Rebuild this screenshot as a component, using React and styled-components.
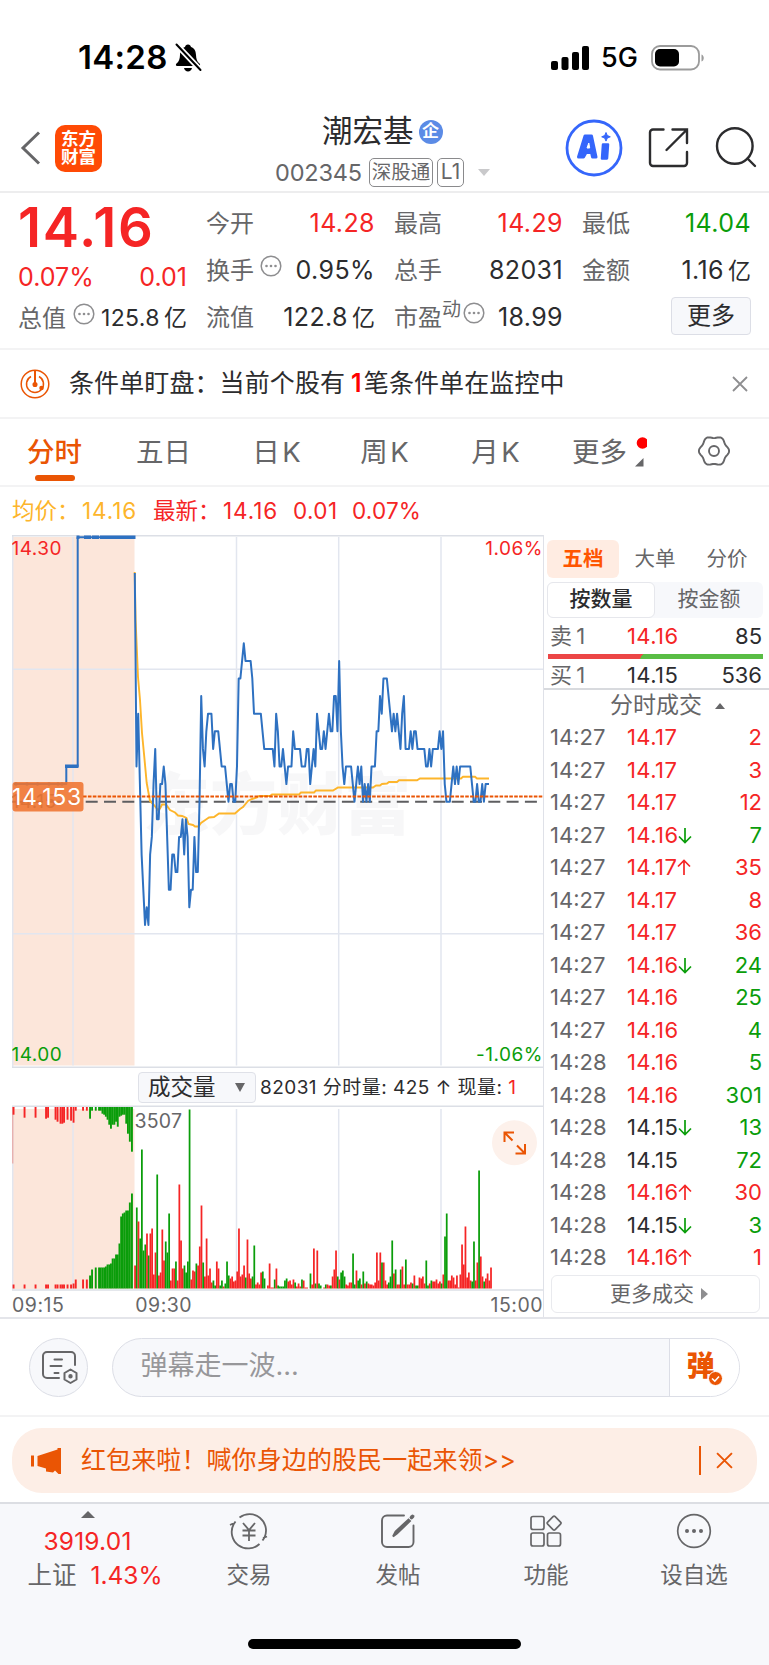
import styled, { createGlobalStyle } from 'styled-components'

const RED = '#f52525'
const GREEN = '#0a9d0a'
const ORANGE = '#ea5504'
const DARK = '#2c2c2e'
const GRAY = '#666668'

const GlobalStyle = createGlobalStyle`
  * {
    box-sizing: border-box;
  }
  body {
    margin: 0;
    background: #fff;
    color: ${DARK};
    font-family: Inter, "Noto Sans CJK SC", sans-serif;
    font-size: 24px;
    line-height: 1;
  }
  svg {
    display: block;
    flex: none;
  }
`

const Page = styled.div`
  width: 769px;
  height: 1665px;
  display: flex;
  flex-direction: column;
  overflow: hidden;
  white-space: nowrap;
`

/* status bar */
const StatusBar = styled.div`
  height: 100px;
  padding: 15px 64px 0 78px;
  display: flex;
  align-items: center;
  color: #000;
`
const Clock = styled.div`
  font-size: 33px;
  font-weight: 600;
  width: 96px;
  letter-spacing: 0.3px;
`
const StatusRight = styled.div`
  margin-left: auto;
  display: flex;
  align-items: center;
`
const Network = styled.span`
  font-size: 27px;
  font-weight: 450;
  width: 60px;
  padding-left: 12px;
`

/* header */
const Header = styled.header`
  height: 93px;
  padding-left: 20px;
  display: flex;
  border-bottom: 2px solid #ededee;
`
const HeaderLeft = styled.div`
  width: 255px;
  display: flex;
  align-items: center;
  padding-top: 5px;
`
const Logo = styled.div`
  width: 47px;
  height: 47px;
  margin-left: 14px;
  border-radius: 10px;
  background: #ff4a05;
  color: #fff;
  font-size: 17.5px;
  font-weight: 700;
  line-height: 18px;
  padding-top: 5px;
  text-align: center;
`
const HeaderMid = styled.div`
  width: 216px;
  display: flex;
  flex-direction: column;
`
const StockName = styled.div`
  display: flex;
  align-items: center;
  height: 33px;
  margin-top: 15px;
  padding-left: 47px;
  font-size: 30.5px;
`
const Badge = styled.span`
  width: 24px;
  height: 24px;
  border-radius: 50%;
  margin-left: 5px;
  background: #5b8be6;
  color: #fff;
  font-size: 17px;
  line-height: 23px;
  font-weight: 700;
  text-align: center;
`
const StockCode = styled.div`
  display: flex;
  align-items: center;
  height: 29px;
  margin-top: 10px;
  font-size: 23.5px;
  color: ${GRAY};
`
const CodeText = styled.span`
  width: 94px;
  letter-spacing: -0.2px;
`
const Tag = styled.span`
  width: ${p => p.$w}px;
  height: 29px;
  margin-right: 4px;
  border: 1.5px solid #8a8a8c;
  border-radius: 5px;
  font-size: ${p => p.$size || 19.5}px;
  line-height: 26px;
  text-align: center;
`
const Caret = styled.i`
  margin-left: ${p => p.$ml || 0}px;
  border: ${p => p.$w || 6.5}px solid transparent;
  border-${p => (p.$up ? 'bottom' : 'top')}: ${p => p.$h || 7}px solid ${p => p.$color || '#c9c9cb'};
  border-${p => (p.$up ? 'top' : 'bottom')}: 0;
`
const HeaderRight = styled.div`
  flex: 1;
  padding: 5px 0 0 74px;
  display: flex;
  align-items: center;
`

/* quote summary */
const Quotes = styled.section`
  height: 157px;
  padding: 0 18px 0 18px;
  display: flex;
  border-bottom: 2px solid #f3f3f4;
`
const QuoteMain = styled.div`
  width: 169px;
  margin-right: 19px;
  display: flex;
  flex-direction: column;
`
const BigPrice = styled.div`
  height: 66px;
  font-size: 54.5px;
  line-height: 68px;
  font-weight: 600;
  color: ${RED};
  letter-spacing: 1.7px;
`
const Change = styled.div`
  display: flex;
  justify-content: space-between;
  height: 36px;
  align-items: center;
  font-size: 25px;
  color: ${RED};
`
const QuoteCol = styled.div`
  width: 169px;
  margin-right: 19px;
  padding-top: 7px;
  display: flex;
  flex-direction: column;
  &:last-child {
    margin-right: 0;
  }
`
const QuoteRow = styled.div`
  height: 47px;
  display: flex;
  align-items: center;
  font-size: ${p => p.$size || 25}px;
`
const Label = styled.span`
  font-size: 24px;
  color: ${GRAY};
`
const Sup = styled.sup`
  font-size: 19px;
  line-height: 19px;
  color: ${GRAY};
  align-self: flex-start;
  margin-top: 6px;
`
const Value = styled.span`
  margin-left: auto;
  letter-spacing: 0.4px;
  color: ${p => p.$color || DARK};
`
const Unit = styled.span`
  font-size: 23px;
  margin-left: 4px;
  letter-spacing: 0;
`
const MoreBtn = styled.button`
  width: 80px;
  height: 38px;
  margin: -4px 0 0 auto;
  padding: 0;
  border: 1.5px solid #dcdee6;
  border-radius: 4px;
  background: #f7f8fb;
  color: ${DARK};
  font: 400 24px Inter, "Noto Sans CJK SC", sans-serif;
  line-height: 34px;
`

/* monitoring notice */
const Notice = styled.div`
  height: 69px;
  padding: 0 21px 0 20px;
  display: flex;
  align-items: center;
  border-bottom: 2px solid #f3f3f4;
  font-size: 25px;
`
const NoticeText = styled.div`
  flex: 1;
  margin-left: 19px;
  letter-spacing: 0.1px;
  b {
    color: #f00;
    font-weight: 600;
    margin: 0 2px 0 6px;
  }
`

/* period tabs */
const Tabs = styled.nav`
  height: 68px;
  display: grid;
  grid-template-columns: 109px 109px 117px 99px 123px 101px 111px;
  border-bottom: 2px solid #f3f3f4;
`
const Tab = styled.div`
  display: flex;
  flex-direction: column;
  align-items: center;
  padding-top: 18px;
  font-size: 27.5px;
  line-height: 30px;
  color: ${p => (p.$active ? ORANGE : GRAY)};
  font-weight: ${p => (p.$active ? 500 : 400)};
  word-spacing: -5px;
`
const Underline = styled.span`
  width: 40px;
  height: 6px;
  border-radius: 3px;
  margin-top: 8px;
  background: ${ORANGE};
`
const MoreTab = styled(Tab)`
  flex-direction: row;
  align-items: flex-start;
  padding-left: 15px;
`
const GearTab = styled(Tab)`
  padding-top: 16px;
`

const InfoLine = styled.div`
  height: 48px;
  padding: 1px 12px 0;
  display: flex;
  align-items: center;
  font-size: 22.5px;
`
const InfoItem = styled.span`
  width: ${p => p.$w}px;
  letter-spacing: ${p => p.$ls || 0}px;
  color: ${p => p.$color || RED};
`

/* main area */
const Main = styled.main`
  height: 784px;
  display: flex;
  border-bottom: 2px solid #e4e5ea;
`
const ChartCol = styled.div`
  width: 544px;
  padding-left: 12px;
  border-right: 1.5px solid #dfe1e8;
`
const VolumeHead = styled.div`
  height: 37px;
  padding: 1px 0 0 126px;
  display: flex;
  align-items: center;
  font-size: 19px;
`
const Select = styled.div`
  width: 118px;
  height: 31px;
  margin-right: 4px;
  padding: 0 10px 0 9px;
  display: flex;
  align-items: center;
  justify-content: space-between;
  border: 1.5px solid #dfe1e8;
  border-radius: 4px;
  background: #f7f8fb;
  font-size: 22.5px;
`
const VolumeText = styled.span`
  color: ${DARK};
  letter-spacing: 0.45px;
  b {
    font-weight: 400;
    color: ${RED};
  }
`
const TimeAxis = styled.div`
  display: flex;
  height: 27px;
  padding-top: 3px;
  align-items: center;
  font-size: 19.5px;
  letter-spacing: 0.5px;
  color: ${GRAY};
  span:nth-child(2) {
    margin-left: 71px;
  }
  span:last-child {
    margin-left: auto;
  }
`

/* order book */
const BookCol = styled.div`
  flex: 1;
  display: flex;
  flex-direction: column;
`
const BookTabs = styled.div`
  display: grid;
  grid-template-columns: repeat(3, 72px);
  padding: 5px 0 0 3px;
`
const BookTab = styled.div`
  height: 38px;
  border-radius: 6px;
  background: ${p => (p.$active ? '#ffece2' : 'none')};
  color: ${p => (p.$active ? '#ff5500' : GRAY)};
  font-size: 20.5px;
  font-weight: ${p => (p.$active ? 700 : 400)};
  line-height: 37px;
  text-align: center;
`
const Segment = styled.div`
  width: 216px;
  height: 36px;
  margin: 4px 0 0 3px;
  display: flex;
  border-radius: 6px;
  background: #f7f8fb;
`
const SegmentItem = styled.div`
  width: 108px;
  border: 1.5px solid ${p => (p.$active ? '#e6e7ec' : 'transparent')};
  border-radius: 6px;
  background: ${p => (p.$active ? '#fff' : 'none')};
  color: ${p => (p.$active ? DARK : GRAY)};
  font-size: 21px;
  font-weight: ${p => (p.$active ? 500 : 400)};
  line-height: 32px;
  text-align: center;
`
const Row = styled.div`
  height: ${p => p.$h || 32.5}px;
  padding: ${p => p.$pt || 0}px 7px 0 6px;
  display: flex;
  align-items: center;
  font-size: 22px;
`
const Time = styled.span`
  width: 77px;
  color: ${GRAY};
  word-spacing: -2px;
`
const Price = styled.span`
  display: flex;
  width: 70px;
  letter-spacing: 0.4px;
  color: ${p => p.$color};
`
const Qty = styled.span`
  flex: 1;
  text-align: right;
  color: ${p => p.$color};
`
const Ratio = styled.div`
  width: 215px;
  height: 5px;
  margin: 0 0 0 4px;
  background: linear-gradient(125deg, #ec4646 43.5%, #59bd45 43.5%);
`
const DealHead = styled.div`
  height: 33px;
  padding-left: 66px;
  display: flex;
  align-items: center;
  border-top: 2px solid #d8dade;
  font-size: 23px;
  color: ${GRAY};
`
const MoreDeals = styled.div`
  width: 209px;
  height: 38px;
  margin: 1px 0 0 7px;
  padding-left: 7px;
  display: flex;
  align-items: center;
  justify-content: center;
  gap: 7px;
  border: 1.5px solid #e9eaee;
  border-radius: 6px;
  font-size: 21px;
  color: ${GRAY};
`

/* comment bar */
const CommentBar = styled.div`
  height: 98px;
  padding: 19px 29px 0;
  display: flex;
  border-bottom: 2px solid #f3f3f4;
`
const RoundBtn = styled.div`
  width: 59px;
  height: 59px;
  border: 1.5px solid #dcdee6;
  border-radius: 50%;
  background: #f7f8fb;
  padding: 11px 0 0 11px;
`
const InputBox = styled.div`
  width: 628px;
  height: 59px;
  margin-left: 23.5px;
  display: flex;
  border: 1.5px solid #dcdee6;
  border-radius: 30px;
  background: #f7f8fb;
  overflow: hidden;
`
const Placeholder = styled.div`
  flex: 1;
  padding-left: 28px;
  font-size: 27px;
  line-height: 53px;
  color: #97979a;
`
const SendBox = styled.div`
  width: 70px;
  border-left: 1.5px solid #dcdee6;
  background: #fff;
  display: flex;
  padding: 13px 0 0 17px;
  font-size: 28px;
  font-weight: 900;
  color: ${ORANGE};
  svg {
    margin: 19px 0 0 -7px;
  }
`

/* promo banner */
const BannerWrap = styled.div`
  height: 87px;
  padding: 11px 12px 0;
  border-bottom: 2px solid #dcdee3;
`
const Banner = styled.div`
  height: 65px;
  border-radius: 30px;
  padding: 0 24px 0 19px;
  display: flex;
  align-items: center;
  background: #fdeee6;
  color: ${ORANGE};
  font-size: 25px;
`
const BannerText = styled.div`
  flex: 1;
  margin-left: 19px;
  letter-spacing: 0.1px;
`
const Divider = styled.span`
  width: 2px;
  height: 29px;
  margin-right: 15px;
  background: ${ORANGE};
`

/* bottom bar */
const BottomBar = styled.footer`
  flex: 1;
  background: #f7f8fb;
  display: flex;
  flex-direction: column;
  align-items: center;
`
const BottomNav = styled.div`
  width: 100%;
  height: 135px;
  display: grid;
  grid-template-columns: 175px 148px 150px 146px 150px;
`
const Index = styled.div`
  display: flex;
  flex-direction: column;
  align-items: center;
  padding-top: 7px;
  font-size: 24.5px;
  color: ${RED};
`
const IndexValue = styled.div`
  margin-top: 11px;
  height: 34px;
  letter-spacing: 0.2px;
`
const IndexName = styled.div`
  display: flex;
  align-items: center;
  gap: 14px;
  margin-left: 15px;
  span {
    color: ${GRAY};
  }
`
const NavItem = styled.div`
  display: flex;
  flex-direction: column;
  align-items: center;
  padding-top: 7px;
  font-size: 22.5px;
  color: ${GRAY};
  svg {
    margin-bottom: 13px;
  }
`
const HomeIndicator = styled.div`
  width: 273px;
  height: 10px;
  border-radius: 5px;
  background: #000;
`

// last price of every minute, in ticks of 0.01 from the previous close
const ticks = [
  13, 2, 5, 1, -3, -5, -7, -6, -7, -3, -2, 1, 3, -1, -1, 1, 1, 2, 1, -2,
  -5, -5, -3, -3, -4, -4, -2, -2, -1, -3, -1, -2, -6, -5, -5, -2, -4, -4, 0, 6,
  3, 2, 4, 5, 5, 5, 3, 4, 4, 4, 3, 2, 2, 2, 1, 0, 1, 1, 0, 0,
  2, 7, 7, 8, 9, 8, 8, 8, 8, 7, 5, 5, 5, 5, 5, 4, 3, 3, 3, 3,
  3, 3, 2, 5, 4, 2, 2, 3, 2, 1, 2, 2, 2, 4, 3, 3, 3, 3, 2, 2,
  2, 3, 3, 1, 2, 3, 2, 5, 4, 3, 3, 4, 3, 4, 5, 4, 4, 6, 6, 4,
  8, 4, 2, 1, 2, 2, 2, 2, 1, 0, 1, 2, 1, 2, 0, 1, 0, 1, 0, 2,
  2, 2, 4, 4, 6, 5, 7, 7, 7, 6, 5, 4, 5, 4, 5, 4, 3, 5, 6, 3,
  3, 3, 4, 3, 4, 4, 3, 3, 3, 3, 3, 2, 2, 3, 2, 3, 3, 3, 3, 4,
  3, 4, 1, 0, 0, 0, 1, 2, 1, 2, 1, 2, 2, 2, 2, 2, 2, 2, 1, 0,
  0, 1, 0, 0, 1, 0, 1, 1, 1,
]

// volume bars, negative ones are sell side (green)
const volumes = [
  23, -81, 67, -50, -139, -38, -44, 55, -33, 55, 60, 14, 36, -114, 13, 16, 59, 28, -47, -36,
  -75, 8, 20, 20, -27, 8, 104, 48, 20, -23, -16, -27, -179, 9, 18, 17, -25, 23, 42, 83,
  -26, 12, 50, 13, 20, 6, -8, -3, 27, 20, -3, -8, 2, -5, -27, -13, 10, 12, 7, 8,
  17, 60, 12, 14, 23, -11, 49, 15, 10, -12, -43, 4, 6, 4, 16, -17, -10, 0, 3, 25,
  1, 1, -9, 20, -3, -2, -2, -2, -8, -10, 7, 8, 4, 9, -6, 2, 5, 2, -9, 8,
  1, 1, 0, -15, 4, 40, -5, 38, -5, -3, 0, 1, -4, 4, 3, -3, 12, 19, 38, -12,
  9, -16, -18, -12, 4, 3, 6, 6, -35, -4, 18, -8, -10, 4, -17, 5, -7, 5, 4, 4,
  3, 6, 36, 8, 36, -26, 26, 8, 4, -6, -12, -48, 15, -19, 4, 4, -19, 22, 4, -29,
  4, 4, 6, -5, 13, -3, -3, 11, 10, 12, 5, -28, -3, 5, -8, 7, 7, 9, 5, 7,
  -5, 14, -52, -75, 8, 8, 13, 11, 4, 13, 1, 14, 44, 24, 62, 11, 16, 8, -7, -47,
  8, 26, -118, 32, 12, -7, 10, 15, 8, 21,
]

// call auction bars: x, height from the top, height from the bottom
const auctionRed = [
  [13.5, 8, 4], [24.5, 11, 4], [35.5, 11, 4], [46, 12, 4], [48, 11, 4], [55.5, 13, 4], [57.5, 15, 4],
  [60.5, 17, 4], [62.3, 17, 4], [64, 16, 4], [67.5, 13, 4], [71, 14, 4], [73.5, 16, 5], [75.7, 4, 9],
  [83, 4, 9], [86.8, 4, 9],
]
const auctionGreen = [
  [90, 12, 13], [92, 4, 19], [95.7, 4, 21], [99, 4, 21], [100.7, 4, 21], [102.4, 7, 21], [104.1, 8, 21],
  [105.8, 10, 22], [107.5, 13, 24], [109.2, 18, 24], [110.9, 22, 25], [112.6, 18, 30], [114.3, 18, 30],
  [116, 15, 34], [117.7, 20, 34], [119.4, 10, 45], [121.1, 9, 72], [122.8, 8, 75], [124.5, 8, 76],
  [126.2, 17, 78], [127.9, 27, 78], [129.8, 35, 86], [131.9, 45, 95],
]

const avgLine =
  '134.7,572 135.6,620 138,677 140,700 142,733 144.3,757 146.7,783 150,801 153,804 158,810 160,808.5 162,804.5 ' +
  '166,804.5 170,810 175,812.5 178,815.5 182,816 186.5,818 188.5,824 193,825 195,826.5 198.5,826.5 201,823 206,819.5 ' +
  '209,817.5 214,817 219,813.5 235,813.5 240,809 243,807 248,801 252,799 257,797.5 259,796 270,796 272,794.5 299,794.5 ' +
  '301,792.5 314,792.5 316,790.5 333,790.5 338,787.5 373,787.5 376,785.5 380,785.5 382,784 387,783.5 389,782 397,782 ' +
  '399,780.3 417,780.3 420,778.5 461,778.5 463,776.7 475,776.7 477,778.5 489,778.5'

const minuteX = i => 134.8 + i * 1.703

// six-lobed outline of the settings gear
const gearPoints = Array.from({ length: 72 }, (_, i) => {
  const a = (i * Math.PI) / 36
  const r = 14 + 1.1 * Math.cos(6 * a)
  return `${(16 + r * Math.cos(a)).toFixed(2)},${(16 + r * Math.sin(a)).toFixed(2)}`
}).join(' ')

const trades = [
  ['14:27', '14.17', '', 2, 1],
  ['14:27', '14.17', '', 3, 1],
  ['14:27', '14.17', '', 12, 1],
  ['14:27', '14.16', 'down', 7, 0],
  ['14:27', '14.17', 'up', 35, 1],
  ['14:27', '14.17', '', 8, 1],
  ['14:27', '14.17', '', 36, 1],
  ['14:27', '14.16', 'down', 24, 0],
  ['14:27', '14.16', '', 25, 0],
  ['14:27', '14.16', '', 4, 0],
  ['14:28', '14.16', '', 5, 0],
  ['14:28', '14.16', '', 301, 0],
  ['14:28', '14.15', 'down', 13, 0],
  ['14:28', '14.15', '', 72, 0],
  ['14:28', '14.16', 'up', 30, 1],
  ['14:28', '14.15', 'down', 3, 0],
  ['14:28', '14.16', 'up', 1, 1],
]

const Arrow = ({ dir }) => (
  <svg width="14" height="22" viewBox="0 0 14 22" fill="none" strokeWidth="1.7" stroke={dir === 'up' ? RED : GREEN}>
    <path d={dir === 'up' ? 'M7 19V5M1 10.5L7 4.5L13 10.5' : 'M7 4V18M1 12.5L7 18.5L13 12.5'} />
  </svg>
)

const DotsIcon = styled.svg`
  margin: -9px 0 0 ${p => p.$ml}px;
`
const Dots = ({ ml }) => (
  <DotsIcon $ml={ml} width="22" height="22" viewBox="0 0 22 22">
    <circle cx="11" cy="11" r="9.8" fill="none" stroke="#8e8e90" strokeWidth="1.5" />
    <g fill="#8e8e90">
      <circle cx="6.5" cy="11" r="1.3" />
      <circle cx="11" cy="11" r="1.3" />
      <circle cx="15.5" cy="11" r="1.3" />
    </g>
  </DotsIcon>
)

const Close = ({ color, size = 16 }) => (
  <svg width={size} height={size} viewBox="0 0 16 16" stroke={color} strokeWidth="1.8">
    <path d="M1 1L15 15M15 1L1 15" />
  </svg>
)

const PriceChart = () => (
  <svg width="532" height="533" viewBox="12 535 532 533">
    <rect x="12.5" y="537" width="122" height="528.5" fill="#fce6da" />
    <g stroke="#e2e6ef" strokeWidth="1.5">
      <path d="M12.7 535V1067M73 537V1065.5M236.5 537V1065.5M338.7 537V1065.5M441 537V1065.5" />
      <path d="M12 669.3H543M12 933.8H543" />
      <path d="M12 535.7H543M12 1067.3H543" stroke="#dcdfe6" strokeWidth="1.6" />
    </g>
    <text x="143" y="829" fontSize="67" fontWeight="900" fill="#f6f6f7" fillOpacity="0.85">东方财富</text>
    <path d="M12.5 801.7H543" stroke="#5e5e60" strokeWidth="2" strokeDasharray="12 6.3" />
    <polyline points={avgLine} fill="none" stroke="#fdb52b" strokeWidth="1.9" />
    <g fill="none" stroke="#2e71c1" strokeWidth="2" strokeLinejoin="round">
      <path d="M14 784H66.3V766.3H77.7V537.3H134" />
      <polyline points={ticks.map((t, i) => `${minuteX(i)},${801.7 - t * 17.6}`).join(' ')} />
    </g>
    <path d="M76.5 537.3H79.500M84 537.3H91M92 537.3H99M100 537.3H135.5M65 766.3H78.5" stroke="#2e71c1" strokeWidth="3.6" />
    <g fill="#2e71c1">
      {[16, 27, 37.5, 49, 58, 62].map(x => <circle key={x} cx={x} cy="784" r="1.8" />)}
    </g>
    <path d="M83 796.5H543" stroke={ORANGE} strokeWidth="2.2" strokeDasharray="3.6 1.3" />
    <g fontSize="19" letterSpacing="0.5">
      <text x="11.5" y="554.5" fill={RED}>14.30</text>
      <text x="543" y="554.5" fill={RED} textAnchor="end">1.06%</text>
      <text x="11.5" y="1061" fill={GREEN}>14.00</text>
      <text x="543" y="1061" fill={GREEN} textAnchor="end">-1.06%</text>
      <text x="11.5" y="808" fill={GRAY}>14.15</text>
    </g>
    <rect x="12.5" y="782" width="71" height="29.5" rx="3" fill="#ef7430" fillOpacity="0.88" />
    <text x="12" y="805" fontSize="23" letterSpacing="0.7" fill="#fff">14.153</text>
  </svg>
)

const VolumeChart = () => (
  <svg width="532" height="186" viewBox="12 1105 532 186">
    <rect x="12.5" y="1109" width="122" height="180" fill="#fce6da" />
    <path d="M12.7 1106V1290M73 1109V1289M236.5 1109V1289M338.7 1109V1289M441 1109V1289" stroke="#e2e6ef" strokeWidth="1.5" />
    <path d="M12.8 1107V1163.5" stroke="#ea9a94" strokeWidth="1" />
    {[...auctionRed.map(b => [...b, RED]), ...auctionGreen.map(b => [...b, GREEN])].map(([x, top, bottom, color]) => (
      <g key={x} fill={color}>
        <rect x={x - 0.9} y="1106.7" width="1.9" height={top} />
        <rect x={x - 0.9} y={1288.5 - bottom} width="1.9" height={bottom} />
      </g>
    ))}
    {volumes.map((v, i) => (
      <rect
        key={i}
        x={minuteX(i) - 0.6}
        y={1288.5 - Math.abs(v)}
        width="1.75"
        height={Math.abs(v)}
        fill={v < 0 ? GREEN : RED}
      />
    ))}
    <path d="M12 1106.3H543M12 1290H543" stroke="#dcdfe6" strokeWidth="1.6" />
    <text x="134.5" y="1128" fontSize="19.5" letterSpacing="0.2" fill={GRAY}>3507</text>
    <circle cx="514.5" cy="1142.7" r="22.5" fill="#fdf1eb" />
    <g fill="none" stroke={ORANGE} strokeWidth="2">
      <path d="M504.5 1142V1132.5H514M504.5 1132.5L512.5 1140.5" />
      <path d="M525 1144V1153.5H515.5M525 1153.5L517 1145.5" />
    </g>
  </svg>
)

const App = () => {
  return (
    <>
      <GlobalStyle />
      <Page>
        <StatusBar>
          <Clock>14:28</Clock>
          <svg width="28" height="30" viewBox="0 0 28 30">
            <path d="M14 1.5c-1.8 0-2.6 1.2-3 2.4C7.4 5 6.2 8 6 12c-.2 4-1 6.5-3.5 8.5-1 1-.8 2.5.8 2.5h21.400c1.6 0 1.8-1.5.8-2.5C23 18.5 22.2 16 22 12c-.2-4-1.4-7-5-8.100-.4-1.2-1.2-2.4-3-2.4z" />
            <path d="M10 25h8c-.5 2.2-2 3.5-4 3.500S10.500 27.200 10 25z" />
            <path d="M2 1L27 27.5" stroke="#fff" strokeWidth="5.5" />
            <path d="M2.5 1.5L26.5 27" stroke="#000" strokeWidth="2" strokeLinecap="round" />
          </svg>
          <StatusRight>
            <svg width="38" height="26" viewBox="0 0 38 26">
              <rect x="0" y="16" width="7" height="9" rx="2" />
              <rect x="10.5" y="12" width="7" height="13" rx="2" />
              <rect x="21" y="7" width="7" height="18" rx="2" />
              <rect x="31" y="1" width="7" height="24" rx="2" />
            </svg>
            <Network>5G</Network>
            <svg width="56" height="26" viewBox="-2 0 56 26">
              <rect x="1" y="1" width="47" height="23.5" rx="8" fill="none" stroke="#9b9b9b" strokeWidth="1.8" />
              <rect x="4" y="4" width="24" height="17.5" rx="5" />
              <path d="M50.5 9.500c3 1 3 6 0 7z" fill="#9b9b9b" />
            </svg>
          </StatusRight>
        </StatusBar>

        <Header>
          <HeaderLeft>
            <svg width="21" height="34" viewBox="0 0 21 34" fill="none" stroke="#666668" strokeWidth="3">
              <path d="M19 1.5L3 17L19 32.5" />
            </svg>
            <Logo>东方<br />财富</Logo>
          </HeaderLeft>
          <HeaderMid>
            <StockName>潮宏基<Badge>企</Badge></StockName>
            <StockCode>
              <CodeText>002345</CodeText>
              <Tag $w={64}>深股通</Tag>
              <Tag $w={27} $size={21}>L1</Tag>
              <Caret $ml={10} />
            </StockCode>
          </HeaderMid>
          <HeaderRight>
            <svg width="203" height="58" viewBox="0 0 203 58" fill="none" stroke={DARK} strokeWidth="2.4">
              <circle cx="29" cy="29" r="27" stroke="#3566fb" strokeWidth="2.8" />
              <g stroke="#3566fb" strokeLinejoin="round" fill="#3566fb">
                <path d="M20 17h6.5l4.500 21h-3.500l-1-4.500h-5.500l-2.500 4.500h-5z" strokeWidth="3" />
                <path d="M22 29l1.800-5 .9 5z" fill="#fff" stroke="#fff" strokeWidth="1" />
                <path d="M38 25.500h5l-1 14h-5z" strokeWidth="2.500" />
                <path d="M41 13.5l1.300 3 3 1.300-3 1.300-1.300 3-1.300-3-3-1.300 3-1.300z" strokeWidth="1" />
              </g>
              <path d="M98.5 10.5H88a3 3 0 0 0-3 3V44a3 3 0 0 0 3 3h31a3 3 0 0 0 3-3V33" strokeLinecap="round" />
              <path d="M107.5 10.5H122V24M122 10.5L101.5 31" strokeLinecap="round" />
              <circle cx="169.8" cy="27" r="17.8" />
              <path d="M182.5 39.5L190 47" strokeLinecap="round" />
            </svg>
          </HeaderRight>
        </Header>

        <Quotes>
          <QuoteMain>
            <BigPrice>14.16</BigPrice>
            <Change><span>0.07%</span><span>0.01</span></Change>
            <QuoteRow $size={23}><Label>总值</Label><Dots ml={7} /><Value>125.8<Unit>亿</Unit></Value></QuoteRow>
          </QuoteMain>
          <QuoteCol>
            <QuoteRow><Label>今开</Label><Value $color={RED}>14.28</Value></QuoteRow>
            <QuoteRow><Label>换手</Label><Dots ml={6} /><Value>0.95%</Value></QuoteRow>
            <QuoteRow><Label>流值</Label><Value>122.8<Unit>亿</Unit></Value></QuoteRow>
          </QuoteCol>
          <QuoteCol>
            <QuoteRow><Label>最高</Label><Value $color={RED}>14.29</Value></QuoteRow>
            <QuoteRow><Label>总手</Label><Value>82031</Value></QuoteRow>
            <QuoteRow><Label>市盈</Label><Sup>动</Sup><Dots ml={2} /><Value>18.99</Value></QuoteRow>
          </QuoteCol>
          <QuoteCol>
            <QuoteRow><Label>最低</Label><Value $color={GREEN}>14.04</Value></QuoteRow>
            <QuoteRow><Label>金额</Label><Value>1.16<Unit>亿</Unit></Value></QuoteRow>
            <QuoteRow><MoreBtn>更多</MoreBtn></QuoteRow>
          </QuoteCol>
        </Quotes>

        <Notice>
          <svg width="30" height="30" viewBox="0 0 30 30" fill="none" stroke={ORANGE} strokeWidth="1.5">
            <circle cx="15" cy="15" r="13.8" />
            <path d="M11 7.5a8.500 8.500 0 1 0 8 0" />
            <path d="M15 1.5V14" strokeWidth="2" />
            <circle cx="15" cy="15.5" r="1.8" fill={ORANGE} />
            <circle cx="21.5" cy="19" r="1.5" fill={ORANGE} />
          </svg>
          <NoticeText>条件单盯盘：当前个股有<b>1</b>笔条件单在监控中</NoticeText>
          <Close color="#8e8e90" />
        </Notice>

        <Tabs>
          <Tab $active>分时<Underline /></Tab>
          <Tab>五日</Tab>
          <Tab>日 K</Tab>
          <Tab>周 K</Tab>
          <Tab>月 K</Tab>
          <MoreTab>
            更多
            <svg width="20" height="36" viewBox="0 3 20 36">
              <circle cx="15.5" cy="6.500" r="5.8" fill="#f00" transform="translate(0 2.500)" />
              <path d="M16.500 24V32.500H8z" fill={GRAY} />
            </svg>
          </MoreTab>
          <GearTab>
            <svg width="32" height="32" viewBox="0 0 32 32" fill="none" stroke={GRAY} strokeWidth="1.9" strokeLinejoin="round">
              <polygon points={gearPoints} />
              <circle cx="16" cy="16" r="5" />
            </svg>
          </GearTab>
        </Tabs>

        <InfoLine>
          <InfoItem $w={70} $color="#fdb52b">均价：</InfoItem>
          <InfoItem $w={71} $ls={0.9} $color="#fdb52b">14.16</InfoItem>
          <InfoItem $w={70}>最新：</InfoItem>
          <InfoItem $w={70} $ls={0.9}>14.16</InfoItem>
          <InfoItem $w={59} $ls={0.4}>0.01</InfoItem>
          <InfoItem $ls={0.2}>0.07%</InfoItem>
        </InfoLine>

        <Main>
          <ChartCol>
            <PriceChart />
            <VolumeHead>
              <Select>成交量<Caret $w={5} $h={9} $color={GRAY} /></Select>
              <VolumeText>82031 分时量: 425 ↑ 现量: <b>1</b></VolumeText>
            </VolumeHead>
            <VolumeChart />
            <TimeAxis><span>09:15</span><span>09:30</span><span>15:00</span></TimeAxis>
          </ChartCol>
          <BookCol>
            <BookTabs>
              <BookTab $active>五档</BookTab>
              <BookTab>大单</BookTab>
              <BookTab>分价</BookTab>
            </BookTabs>
            <Segment>
              <SegmentItem $active>按数量</SegmentItem>
              <SegmentItem>按金额</SegmentItem>
            </Segment>
            <Row $h={36}><Time>卖 1</Time><Price $color={RED}>14.16</Price><Qty $color={DARK}>85</Qty></Row>
            <Ratio />
            <Row $h={29} $pt={3}><Time>买 1</Time><Price $color={DARK}>14.15</Price><Qty $color={DARK}>536</Qty></Row>
            <DealHead>分时成交<Caret $up $ml={13} $w={5} $h={6} $color={GRAY} /></DealHead>
            {trades.map(([time, price, dir, qty, buy], i) => (
              <Row key={i}>
                <Time>{time}</Time>
                <Price $color={price === '14.15' ? DARK : RED}>{price}{dir && <Arrow dir={dir} />}</Price>
                <Qty $color={buy ? RED : GREEN}>{qty}</Qty>
              </Row>
            ))}
            <MoreDeals>
              更多成交
              <svg width="7" height="12" viewBox="0 0 7 12"><path d="M0 0L7 6L0 12Z" fill="#8e8e90" /></svg>
            </MoreDeals>
          </BookCol>
        </Main>

        <CommentBar>
          <RoundBtn>
            <svg width="38" height="36" viewBox="0 0 38 36" fill="none" stroke={GRAY} strokeWidth="2" strokeLinecap="round">
              <path d="M18 28H6a4 4 0 0 1-4-4V6a4 4 0 0 1 4-4h24a4 4 0 0 1 4 4V15" />
              <path d="M13.5 9.5H21M9.5 16H20.5M13.5 23H17.5" />
              <path d="M29.5 19.5L35.5 23V29.5L29.5 33L23.5 29.5V23Z" strokeLinejoin="round" />
              <circle cx="29.5" cy="26.3" r="1.2" fill={GRAY} />
            </svg>
          </RoundBtn>
          <InputBox>
            <Placeholder>弹幕走一波...</Placeholder>
            <SendBox>
              弹
              <svg width="15" height="15" viewBox="0 0 15 15">
                <circle cx="7.5" cy="7.5" r="7" fill={ORANGE} stroke="#fff" />
                <path d="M4 7.5L6.8 10.2L11 5.5" fill="none" stroke="#fff" strokeWidth="1.6" />
              </svg>
            </SendBox>
          </InputBox>
        </CommentBar>

        <BannerWrap>
          <Banner>
            <svg width="31" height="26" viewBox="0 0 31 26" fill={ORANGE}>
              <path d="M0 7.5H3V18.5H0zM6.5 8L26.5 1.5V0H30V26H27.5L24 22.5L22 24.5L15 23.5V20.5L6.5 18z" />
            </svg>
            <BannerText>红包来啦！喊你身边的股民一起来领&gt;&gt;</BannerText>
            <Divider />
            <Close color={ORANGE} size={17} />
          </Banner>
        </BannerWrap>

        <BottomBar>
          <BottomNav>
            <Index>
              <Caret $up $w={7} $h={7} $color={GRAY} />
              <IndexValue>3919.01</IndexValue>
              <IndexName><span>上证</span>1.43%</IndexName>
            </Index>
            <NavItem>
              <svg width="40" height="40" viewBox="0 0 40 40" fill="none" stroke={GRAY} strokeWidth="1.8">
                <path d="M10.5 6.5A16.500 16.500 0 0 1 35.500 26.500L33.500 29.500M38 25.500L34 27" />
                <path d="M30.500 33A16.500 16.500 0 0 1 4.500 13.500L6.500 10.500M1 14L6 11.500" />
                <path d="M14 12L20 19L26 12M13.500 19.500H26.500M13.500 24.500H26.500M20 19V30" />
              </svg>
              交易
            </NavItem>
            <NavItem>
              <svg width="40" height="40" viewBox="0 0 40 40" fill="none" stroke={GRAY} strokeWidth="1.9" strokeLinecap="round">
                <path d="M26 4.5H9a5 5 0 0 0-5 5V31a5 5 0 0 0 5 5H30.500a5 5 0 0 0 5-5V14.500" />
                <path d="M15 25.5L17.5 20.5L30.500 8.500L32 10L19 22.500Z" fill={GRAY} />
                <path d="M33.5 6.5L34.5 5.5" strokeWidth="3.8" />
              </svg>
              发帖
            </NavItem>
            <NavItem>
              <svg width="40" height="40" viewBox="0 0 40 40" fill="none" stroke={GRAY} strokeWidth="1.7">
                <rect x="5" y="5.5" width="13" height="13" rx="2" />
                <rect x="5" y="22" width="13" height="13" rx="2" />
                <rect x="21.5" y="22" width="13" height="13" rx="2" />
                <rect x="22.8" y="6.8" width="10.6" height="10.6" rx="1.5" transform="rotate(45 28.100 12.100)" />
              </svg>
              功能
            </NavItem>
            <NavItem>
              <svg width="40" height="40" viewBox="0 0 40 40" fill={GRAY}>
                <circle cx="20" cy="20" r="16.3" fill="none" stroke={GRAY} strokeWidth="1.7" />
                <circle cx="13" cy="20" r="2" />
                <circle cx="20" cy="20" r="2" />
                <circle cx="27" cy="20" r="2" />
              </svg>
              设自选
            </NavItem>
          </BottomNav>
          <HomeIndicator />
        </BottomBar>
      </Page>
    </>
  )
}

export default App
